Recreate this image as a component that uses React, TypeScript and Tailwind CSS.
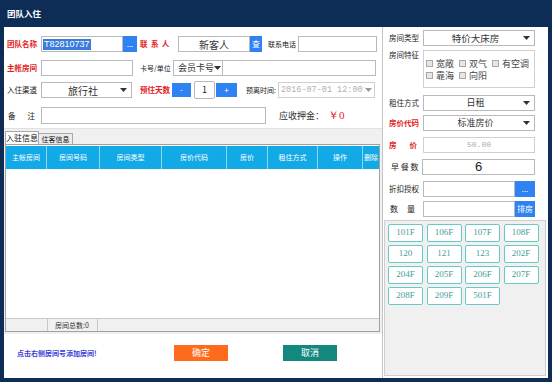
import React from 'react';

const Caret: React.FC<{ light?: boolean }> = ({ light }) => (
  <svg width="7" height="4" viewBox="0 0 7 4" className="shrink-0">
    <path d="M0 0h7L3.5 4z" fill={light ? '#9a9a9a' : '#333'} />
  </svg>
);

const Label: React.FC<{ w: string; red?: boolean; children: React.ReactNode; className?: string }> = ({ w, red, children, className = '' }) => (
  <div className={`${w} shrink-0 text-[7.5px] leading-none whitespace-nowrap ${red ? 'text-[#e3211b] font-bold' : 'text-[#222]'} ${className}`}>
    {children}
  </div>
);

const Box: React.FC<{ w: string; h?: string; className?: string; children?: React.ReactNode }> = ({ w, h = 'h-[16px]', className = '', children }) => (
  <div className={`${w} ${h} shrink-0 border border-[#b9b9b9] bg-white flex items-center overflow-hidden ${className}`}>
    {children}
  </div>
);

const Select: React.FC<{ w: string; text: string; className?: string; textCls?: string }> = ({ w, text, className = '', textCls = 'text-[9px]' }) => (
  <Box w={w} className={`px-[4px] ${className}`}>
    <span className={`flex-1 text-center whitespace-nowrap text-[#333] ${textCls}`}>{text}</span>
    <Caret />
  </Box>
);

const BlueBtn: React.FC<{ w: string; h?: string; children: React.ReactNode }> = ({ w, h = 'h-[16px]', children }) => (
  <div className={`${w} ${h} shrink-0 bg-[#2f82f2] text-white text-[8px] flex items-center justify-center leading-none whitespace-nowrap`}>
    {children}
  </div>
);

const COLS = [
  { name: '主帐房间', w: 'w-[41px]' },
  { name: '房间号码', w: 'w-[53px]' },
  { name: '房间类型', w: 'w-[62px]' },
  { name: '房价代码', w: 'w-[65px]' },
  { name: '房价', w: 'w-[41px]' },
  { name: '租住方式', w: 'w-[50px]' },
  { name: '操作', w: 'w-[45px]' },
  { name: '删除', w: 'w-[16px]' },
];

const ROOMS = ['101F', '106F', '107F', '108F', '120', '121', '123', '202F', '204F', '205F', '206F', '207F', '208F', '209F', '501F'];

const FEATURES = [
  ['宽敞', '双气', '有空调'],
  ['靠海', '向阳'],
];

const RightRow: React.FC<{ label: React.ReactNode; red?: boolean; mt: string; children: React.ReactNode; labelCls?: string }> = ({ label, red, mt, children, labelCls = '' }) => (
  <div className={`flex items-center ${mt}`}>
    <Label w="w-[34px]" red={red} className={labelCls}>{label}</Label>
    {children}
  </div>
);

export default function App() {
  return (
    <div className="w-[552px] h-[382px] bg-[#0e2d56] flex flex-col font-['Noto_Sans_CJK_SC','Liberation_Sans',sans-serif] overflow-hidden">
      {/* title bar */}
      <div className="h-[27px] shrink-0 flex items-center pl-[7px] text-white font-bold text-[8.5px]">团队入住</div>

      <div className="flex-1 mx-[4px] mb-[4px] bg-white flex min-h-0">
        {/* left panel */}
        <div className="w-[379px] shrink-0 flex flex-col border-r border-[#c4c4c4]">
          {/* row 1 */}
          <div className="flex items-center mt-[9px] pl-[3px]">
            <Label w="w-[34px]" red>团队名称</Label>
            <Box w="w-[82px]" className="px-[1px]">
              <span className="bg-[#3a7bdc] text-white text-[9px] leading-[11px] px-[1px] font-['Liberation_Sans',sans-serif]">T82810737</span>
            </Box>
            <BlueBtn w="w-[14px]">...</BlueBtn>
            <Label w="w-[38px]" red className="ml-[3px]">联&nbsp;&nbsp;系&nbsp;&nbsp;人</Label>
            <Box w="w-[72px]"><span className="flex-1 text-center text-[10px] text-[#333]">新客人</span></Box>
            <BlueBtn w="w-[12px]">查</BlueBtn>
            <Label w="w-[30px]" className="ml-[6px] text-[7px]">联系电话</Label>
            <Box w="w-[79px]" />
          </div>

          {/* row 2 */}
          <div className="flex items-center mt-[8px] pl-[3px]">
            <Label w="w-[34px]" red>主帐房间</Label>
            <Box w="w-[92px]" />
            <Label w="w-[33px]" className="ml-[7px] text-[7px]">卡号/单位</Label>
            <Select w="w-[49px]" text="会员卡号" className="border-r-0 px-[2px]" textCls="text-[9px] text-left" />
            <Box w="w-[154px]" />
          </div>

          {/* row 3 */}
          <div className="flex items-center mt-[5px] pl-[3px]">
            <Label w="w-[34px]">入住渠道</Label>
            <Select w="w-[91px]" text="旅行社" textCls="text-[10px]" />
            <Label w="w-[32px]" red className="ml-[8px]">预住天数</Label>
            <BlueBtn w="w-[19px]" h="h-[14px]">-</BlueBtn>
            <Box w="w-[21px]" h="h-[18px]" className="ml-[3px] justify-center text-[9px] text-[#222] rounded-[2px]">1</Box>
            <div className="ml-[1px]"><BlueBtn w="w-[21px]" h="h-[14px]">+</BlueBtn></div>
            <Label w="w-[32px]" className="ml-[9px] text-[7px]">预离时间:</Label>
            <Box w="w-[97px]" className="px-[2px] border-[#cfcfcf]">
              <span className="flex-1 text-[8.5px] text-[#b0b0b0] whitespace-nowrap overflow-hidden font-['Liberation_Mono',monospace]">2016-07-01 12:00:0</span>
              <Caret light />
            </Box>
          </div>

          {/* row 4 */}
          <div className="flex items-center mt-[8px] pl-[3px]">
            <Label w="w-[34px]" className="flex justify-between pr-[6px] pl-[1px]"><span>备</span><span>注</span></Label>
            <Box w="w-[225px]" h="h-[17px]" />
            <span className="ml-[13px] text-[9px] text-[#333] w-[49px] whitespace-nowrap">应收押金：</span>
            <span className="text-[11px] text-[#e3211b] font-['Liberation_Serif',serif]">￥0</span>
          </div>

          {/* tabs */}
          <div className="flex-1 flex flex-col mt-[4px] bg-[#f0f0f0] min-h-0">
            <div className="h-[16px] shrink-0 flex items-end pl-[1px] border-t border-[#e2e2e2]">
              <div className="w-[34px] h-[13px] bg-white border border-b-0 border-[#a8a8a8] text-[8px] leading-[12px] text-center text-[#111] whitespace-nowrap">入驻信息</div>
              <div className="w-[34px] h-[11px] bg-[#ececec] border border-b-0 border-l-0 border-[#a8a8a8] text-[7px] leading-[10px] text-center text-[#111] whitespace-nowrap">住客信息</div>
            </div>
            <div className="h-[188px] shrink-0 ml-[1px] mr-[2px] border border-[#a0a0a0] bg-white flex flex-col">
              <div className="h-[23px] shrink-0 mt-[1px] flex bg-[#12a9e7]">
                {COLS.map((c, i) => (
                  <div
                    key={c.name}
                    className={`${c.w} shrink-0 flex items-center justify-center text-white text-[7px] whitespace-nowrap overflow-hidden ${i < COLS.length - 1 ? 'border-r border-[#8fd7f5]' : ''}`}
                  >
                    {c.name}
                  </div>
                ))}
              </div>
              <div className="flex-1" />
              <div className="h-[13px] shrink-0 bg-[#f0f0f0] border-t border-[#c9c9c9] flex">
                <div className="ml-[41px] w-[51px] border-l border-r border-[#c9c9c9] text-[7px] leading-[12px] pl-[7px] text-[#333] whitespace-nowrap">房间总数:0</div>
              </div>
            </div>
            <div className="h-[2px] shrink-0" />
            <div className="flex-1 bg-white flex items-center pb-[6px]">
              <span className="ml-[13px] w-[157px] text-[7px] font-bold text-[#3b3bd6] whitespace-nowrap">点击右侧房间号添加房间!</span>
              <div className="w-[54px] h-[16px] bg-[#ff6b1c] text-white text-[9px] flex items-center justify-center">确定</div>
              <div className="ml-[55px] w-[54px] h-[16px] bg-[#14877f] text-white text-[9px] flex items-center justify-center">取消</div>
            </div>
          </div>
        </div>

        {/* right panel */}
        <div className="flex-1 flex flex-col pl-[6px] min-w-0">
          <RightRow label="房间类型" mt="mt-[3px]">
            <Select w="w-[112px]" text="特价大床房" textCls="text-[9.5px]" />
          </RightRow>
          <div className="flex mt-[4px]">
            <Label w="w-[34px]" className="pt-[1px]">房间特征</Label>
            <Box w="w-[112px]" h="h-[38px]" className="flex-col items-start justify-center pl-[2px] gap-[1px] border-[#d0d0d0]">
              {FEATURES.map((row, ri) => (
                <div key={ri} className="flex items-center">
                  {row.map(f => (
                    <div key={f} className="flex items-center mr-[5px] shrink-0 whitespace-nowrap">
                      <span className="w-[7px] h-[7px] shrink-0 border border-[#a8a8a8] bg-[#e6e6e6] mr-[3px]" />
                      <span className="text-[9px] leading-[11px] text-[#444]">{f}</span>
                    </div>
                  ))}
                </div>
              ))}
            </Box>
          </div>
          <RightRow label="租住方式" mt="mt-[7px]">
            <Select w="w-[112px]" text="日租" textCls="text-[9px]" />
          </RightRow>
          <RightRow label="房价代码" red mt="mt-[4px]">
            <Select w="w-[112px]" text="标准房价" textCls="text-[9px]" />
          </RightRow>
          <RightRow label={<><span>房</span><span>价</span></>} red mt="mt-[6px]" labelCls="flex justify-between pr-[6px]">
            <Box w="w-[112px]" className="justify-center border-[#d0d0d0]">
              <span className="text-[8px] text-[#aaa] font-['Liberation_Mono',monospace]">50.00</span>
            </Box>
          </RightRow>
          <div className="flex items-center mt-[6px]">
            <div className="w-[33px] shrink-0 text-[8px] text-[#222] pl-[2px] whitespace-nowrap">早 餐 数</div>
            <Box w="w-[113px]" className="justify-center border-[#9fb7d8]">
              <span className="text-[13px] text-[#222] font-['Liberation_Sans',sans-serif]">6</span>
            </Box>
          </div>
          <div className="flex items-center mt-[6px]">
            <Label w="w-[34px]">折扣授权</Label>
            <Box w="w-[92px]" />
            <BlueBtn w="w-[20px]">...</BlueBtn>
          </div>
          <div className="flex items-center mt-[4px]">
            <Label w="w-[34px]" className="flex justify-between pr-[8px] pl-[1px] text-[8px]"><span>数</span><span>量</span></Label>
            <Box w="w-[92px]" />
            <BlueBtn w="w-[20px]">排房</BlueBtn>
          </div>
          <div className="flex-1 mt-[3px] mb-[2px] -ml-[5px] mr-[2px] bg-[#f0f0f0] border border-[#cfcfcf] pt-[3px] pl-[3px]">
            <div className="grid grid-cols-[35px_35px_35px_35px] gap-x-[3.5px] gap-y-[3px]">
              {ROOMS.map(r => (
                <div key={r} className="h-[18px] bg-white border border-[#69c9c4] rounded-[2px] flex items-center justify-center text-[9px] text-[#3f9d9a] font-['Liberation_Serif',serif]">
                  {r}
                </div>
              ))}
            </div>
          </div>
        </div>
      </div>
    </div>
  );
}
